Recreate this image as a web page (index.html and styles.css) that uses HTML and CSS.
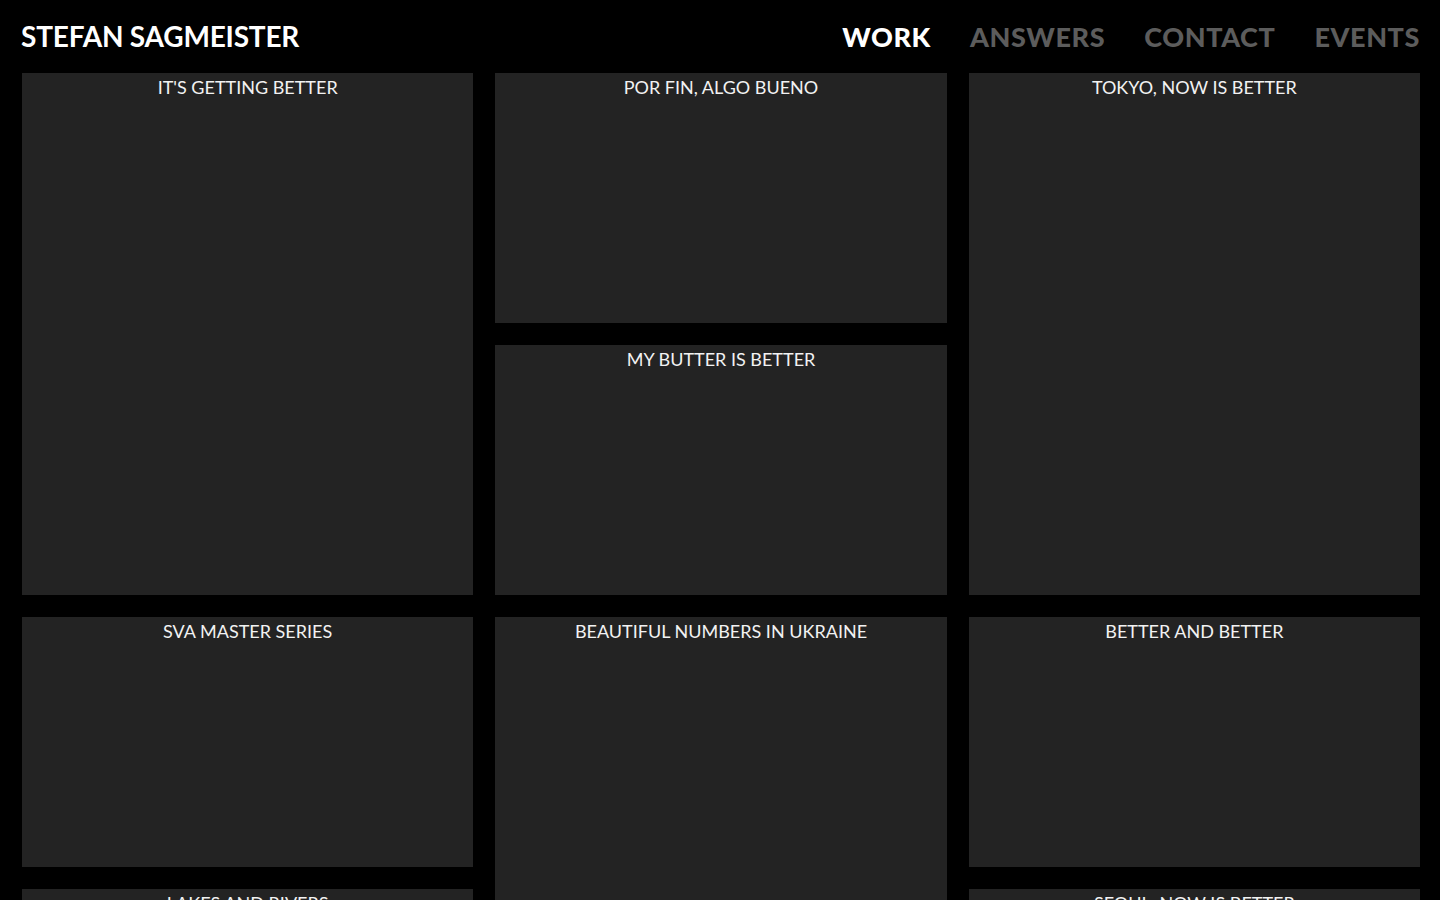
FILE: index.html
```html
<!DOCTYPE html>
<html lang="en">
<head>
<meta charset="utf-8">
<title>Stefan Sagmeister</title>
<link rel="stylesheet" href="styles.css">
</head>
<body>
<header class="site-header">
  <a class="logo" href="#">STEFAN SAGMEISTER</a>
  <nav class="nav">
    <a class="nav-link active" href="#">WORK</a>
    <a class="nav-link" href="#">ANSWERS</a>
    <a class="nav-link" href="#">CONTACT</a>
    <a class="nav-link" href="#">EVENTS</a>
  </nav>
</header>
<main class="grid">
  <a class="card tall c1" href="#"><span class="title">IT'S GETTING BETTER</span></a>
  <a class="card c2" href="#"><span class="title">POR FIN, ALGO BUENO</span></a>
  <a class="card tall c3" href="#"><span class="title">TOKYO, NOW IS BETTER</span></a>
  <a class="card c2" href="#"><span class="title">MY BUTTER IS BETTER</span></a>
  <a class="card c1" href="#"><span class="title">SVA MASTER SERIES</span></a>
  <a class="card tall c2" href="#"><span class="title">BEAUTIFUL NUMBERS IN UKRAINE</span></a>
  <a class="card c3" href="#"><span class="title">BETTER AND BETTER</span></a>
  <a class="card c1" href="#"><span class="title">LAKES AND RIVERS</span></a>
  <a class="card c3" href="#"><span class="title">SEOUL, NOW IS BETTER</span></a>
</main>
</body>
</html>
```
FILE: styles.css
```css
* { box-sizing: border-box; }
html, body {
  margin: 0;
  padding: 0;
  background: #000;
  color: #fff;
  font-family: Lato, "Open Sans", "Liberation Sans", sans-serif;
}
a { text-decoration: none; color: inherit; }

.site-header {
  height: 73px;
  display: flex;
  justify-content: space-between;
  align-items: flex-start;
  padding: 0 20px 0 21px;
}
.logo {
  font-weight: 700;
  font-size: 28px;
  line-height: 1;
  margin-top: 22px;
  letter-spacing: -0.2px;
  color: #fff;
}
.nav {
  display: flex;
  gap: 39px;
  margin-top: 23px;
}
.nav-link {
  font-weight: 900;
  font-size: 27px;
  line-height: 1;
  letter-spacing: 0.6px;
  color: #5c5c5c;
}
.nav-link.active { color: #fff; }

.grid {
  display: grid;
  grid-template-columns: repeat(3, 1fr);
  grid-auto-rows: 250px;
  gap: 22px;
  padding: 0 20px 0 22px;
  grid-auto-flow: dense;
}
.card {
  background: #232323;
  display: flex;
  justify-content: center;
  align-items: flex-start;
  padding-top: 4px;
}
.card.tall { grid-row: span 2; }
.c1 { grid-column: 1; }
.c2 { grid-column: 2; }
.c3 { grid-column: 3; }
.title {
  font-size: 18px;
  line-height: 1.2;
  color: #f2f2f2;
  letter-spacing: 0;
}
```
